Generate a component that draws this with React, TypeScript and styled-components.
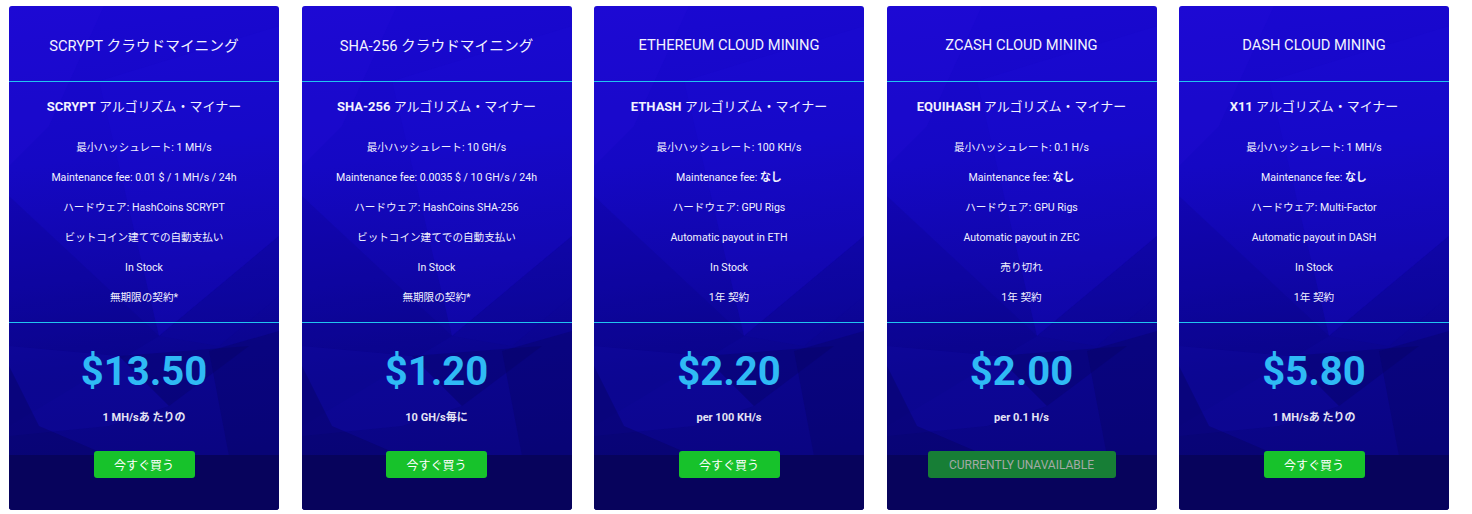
import React from "react";
import styled, { createGlobalStyle } from "styled-components";

const GlobalStyle = createGlobalStyle`
  body {
    margin: 0;
    background: #ffffff;
    font-family: Roboto, "Noto Sans CJK JP", sans-serif;
  }
`;

const Page = styled.div`
  display: grid;
  grid-template-columns: repeat(5, 270px);
  column-gap: 22.5px;
  padding: 6px 0 0 9px;
`;

const Card = styled.div`
  position: relative;
  height: 504px;
  border-radius: 3px;
  overflow: hidden;
  display: flex;
  flex-direction: column;
  color: #f2f2ff;
  text-align: center;
  background: linear-gradient(172deg, #1a08d2 0%, #1508c4 30%, #1006a8 52%, #0b0590 68%, #0a0582 88%);
`;

const Facets = styled.svg`
  position: absolute;
  inset: 0;
  width: 100%;
  height: 100%;
  pointer-events: none;
`;

const Header = styled.div`
  position: relative;
  height: 76px;
  padding-top: 2px;
  box-sizing: border-box;
  display: flex;
  align-items: center;
  justify-content: center;
  font-size: 14.7px;
  border-bottom: 1px solid #21c4f0;
`;

const Features = styled.div`
  position: relative;
  height: 240px;
  border-bottom: 1px solid #21c4f0;
  display: flex;
  flex-direction: column;
`;

const Algo = styled.div`
  padding-top: 15px;
  line-height: 20px;
  font-size: 13px;
  margin-bottom: 16px;
  b {
    font-weight: 700;
  }
`;

const Row = styled.div`
  line-height: 30px;
  font-size: 10.6px;
  b {
    font-weight: 700;
    font-size: 11px;
  }
`;

const PriceBox = styled.div`
  position: relative;
  display: flex;
  flex-direction: column;
  align-items: center;
  padding-top: 25px;
`;

const Price = styled.div`
  font-size: 40px;
  font-weight: 700;
  line-height: 48px;
  color: #2fbaf5;
`;

const Per = styled.div`
  margin-top: 14px;
  line-height: 16px;
  font-size: 11px;
  font-weight: 700;
  color: #e4e4f4;
`;

const BuyButton = styled.div<{ $off?: boolean }>`
  margin-top: 25px;
  height: 27px;
  width: ${(p) => (p.$off ? "188px" : "101px")};
  display: flex;
  align-items: center;
  justify-content: center;
  border-radius: 3px;
  font-size: 12px;
  background: ${(p) => (p.$off ? "#177e36" : "#17c22b")};
  color: ${(p) => (p.$off ? "#a3aaa6" : "#ffffff")};
`;

interface Plan {
  title: string;
  algo: string;
  rows: React.ReactNode[];
  price: string;
  per: string;
  off?: boolean;
}

const plans: Plan[] = [
  {
    title: "SCRYPT クラウドマイニング",
    algo: "SCRYPT",
    rows: [
      "最小ハッシュレート: 1 MH/s",
      "Maintenance fee: 0.01 $ / 1 MH/s / 24h",
      "ハードウェア: HashCoins SCRYPT",
      "ビットコイン建てでの自動支払い",
      "In Stock",
      "無期限の契約*",
    ],
    price: "$13.50",
    per: "1 MH/sあ たりの",
  },
  {
    title: "SHA-256 クラウドマイニング",
    algo: "SHA-256",
    rows: [
      "最小ハッシュレート: 10 GH/s",
      "Maintenance fee: 0.0035 $ / 10 GH/s / 24h",
      "ハードウェア: HashCoins SHA-256",
      "ビットコイン建てでの自動支払い",
      "In Stock",
      "無期限の契約*",
    ],
    price: "$1.20",
    per: "10 GH/s毎に",
  },
  {
    title: "ETHEREUM CLOUD MINING",
    algo: "ETHASH",
    rows: [
      "最小ハッシュレート: 100 KH/s",
      <>Maintenance fee: <b>なし</b></>,
      "ハードウェア: GPU Rigs",
      "Automatic payout in ETH",
      "In Stock",
      "1年 契約",
    ],
    price: "$2.20",
    per: "per 100 KH/s",
  },
  {
    title: "ZCASH CLOUD MINING",
    algo: "EQUIHASH",
    rows: [
      "最小ハッシュレート: 0.1 H/s",
      <>Maintenance fee: <b>なし</b></>,
      "ハードウェア: GPU Rigs",
      "Automatic payout in ZEC",
      "売り切れ",
      "1年 契約",
    ],
    price: "$2.00",
    per: "per 0.1 H/s",
    off: true,
  },
  {
    title: "DASH CLOUD MINING",
    algo: "X11",
    rows: [
      "最小ハッシュレート: 1 MH/s",
      <>Maintenance fee: <b>なし</b></>,
      "ハードウェア: Multi-Factor",
      "Automatic payout in DASH",
      "In Stock",
      "1年 契約",
    ],
    price: "$5.80",
    per: "1 MH/sあ たりの",
  },
];

// low-poly background shading
const Background = () => (
  <Facets viewBox="0 0 270 504" preserveAspectRatio="none">
    <polygon points="0,0 95,0 40,120 0,160" fill="#2a10e0" opacity="0.18" />
    <polygon points="90,75 270,20 270,230 150,330" fill="#1c0ad8" opacity="0.25" />
    <polygon points="0,190 150,330 0,420" fill="#050270" opacity="0.15" />
    <polygon points="150,330 270,230 270,290 210,340" fill="#0d06a0" opacity="0.3" />
    <polygon points="0,340 110,350 160,400 100,420 0,430" fill="#140cab" opacity="0.25" />
    <polygon points="110,350 160,400 240,340" fill="#05025c" opacity="0.3" />
    <polygon points="200,345 270,325 270,450 220,450" fill="#06035e" opacity="0.3" />
    <polygon points="0,360 30,420 100,450 0,450" fill="#06035a" opacity="0.35" />
    <rect x="0" y="449" width="270" height="55" fill="#07035c" />
  </Facets>
);

function App() {
  return (
    <>
      <GlobalStyle />
      <Page>
        {plans.map((p) => (
          <Card key={p.title}>
            <Background />
            <Header>{p.title}</Header>
            <Features>
              <Algo>
                <b>{p.algo}</b> アルゴリズム・マイナー
              </Algo>
              {p.rows.map((r, i) => (
                <Row key={i}>{r}</Row>
              ))}
            </Features>
            <PriceBox>
              <Price>{p.price}</Price>
              <Per>{p.per}</Per>
              <BuyButton $off={p.off}>{p.off ? "CURRENTLY UNAVAILABLE" : "今すぐ買う"}</BuyButton>
            </PriceBox>
          </Card>
        ))}
      </Page>
    </>
  );
}

export default App;
